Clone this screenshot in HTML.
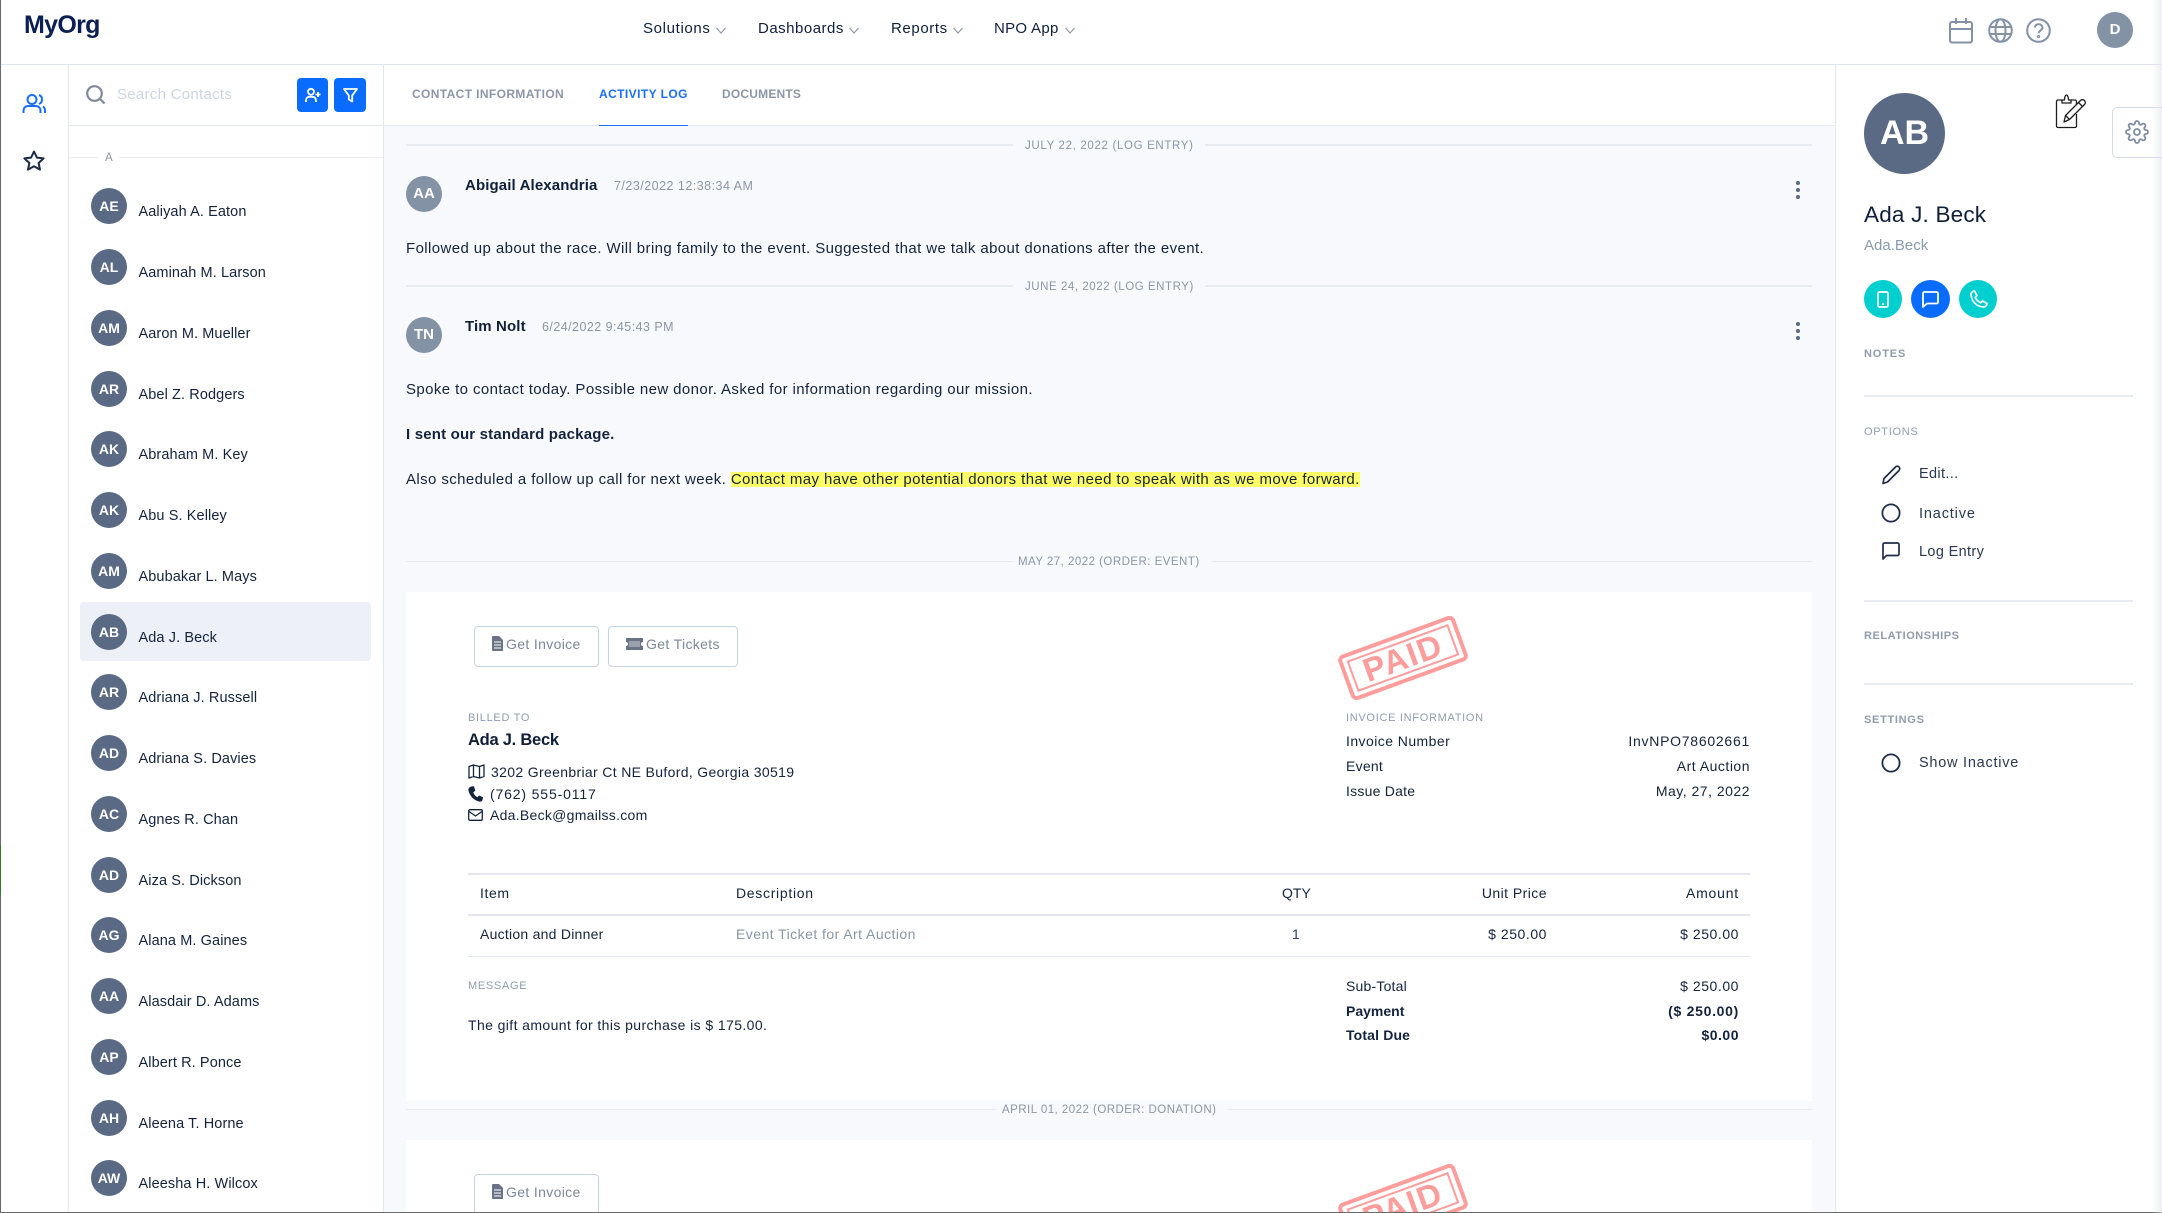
<!DOCTYPE html>
<html lang="en"><head><meta charset="utf-8"><title>MyOrg Contacts</title>
<style>
html,body{margin:0;padding:0;width:2162px;height:1213px;overflow:hidden;background:#fff}
body{position:relative;font-family:"Liberation Sans",sans-serif;color:#14233c;font-size:14px}
.a,.t{position:absolute}
.t{white-space:nowrap;line-height:20px}
.b{font-size:15px;letter-spacing:.4px}
.hl{background:#ffff66;padding:0;display:inline-block;line-height:15px}
.nav{font-size:15px;letter-spacing:.42px;color:#0f1f3a}
.tab{font-size:12px;font-weight:bold;letter-spacing:.38px;color:#8c96a6}
.lab{font-size:11px;font-weight:bold;letter-spacing:.7px;color:#909cae}
.c{position:absolute;left:91px;width:280px;height:36px}
.c i{position:absolute;left:0;top:0;width:36px;height:36px;border-radius:50%;background:#5a6a85;color:#fff;font:bold 14px/36px "Liberation Sans",sans-serif;text-align:center}
.c span{position:absolute;left:47.500px;top:6px;line-height:36px;white-space:nowrap;font-size:14.500px;letter-spacing:.1px;color:#14233c}
.av{position:absolute;width:36px;height:36px;border-radius:50%;background:#8492a6;color:#fff;font:bold 15px/36px "Liberation Sans",sans-serif;text-align:center}
.dv{position:absolute;background:#e6ebf2}
.dl{font-size:11.500px;letter-spacing:.55px;color:#8c96a6;font-weight:normal}
.btn{position:absolute;box-sizing:border-box;height:41px;border:1px solid #c6d3e1;border-radius:4px;background:#fff;color:#7c8798;font-size:14px;line-height:34px;white-space:nowrap;letter-spacing:.35px}
.dots b{display:block;width:4px;height:4px;border-radius:50%;background:#5a6a80;margin-bottom:3px}
.ln{position:absolute;left:1864px;width:269px;height:2px;background:#e8ecf2}
.op{letter-spacing:.35px;color:#2a3850;font-size:14.500px}
.r{text-align:right}
svg{position:absolute;overflow:visible}
</style></head><body>

<!-- content background -->
<div class="a" style="left:384px;top:126px;width:1452px;height:1087px;background:#f7f9fc"></div>
<!-- column & header borders -->
<div class="a" style="left:0;top:64px;width:2162px;height:1px;background:#dfe5ee"></div>
<div class="a" style="left:68px;top:64px;width:1px;height:1149px;background:#e3e8f0"></div>
<div class="a" style="left:383px;top:64px;width:1px;height:1149px;background:#e3e8f0"></div>
<div class="a" style="left:69px;top:125px;width:1767px;height:1px;background:#e3e8f0"></div>

<!-- header -->
<div class="t" style="left:24px;top:10px;font-size:25px;line-height:30px;font-weight:bold;color:#0b1f52;letter-spacing:-.7px">MyOrg</div>
<div class="t nav" style="left:643px;top:19px;letter-spacing:.65px">Solutions</div>
<div class="t nav" style="left:758px;top:19px;letter-spacing:.5px">Dashboards</div>
<div class="t nav" style="left:891px;top:19px;letter-spacing:.6px">Reports</div>
<div class="t nav" style="left:994px;top:19px;letter-spacing:.3px">NPO App</div>
<svg style="left:716px;top:27px" width="10" height="7" fill="none" stroke="#8a96a8" stroke-width="1.100"><path d="M.5 1 5 6 9.500 1"/></svg>
<svg style="left:849px;top:27px" width="10" height="7" fill="none" stroke="#8a96a8" stroke-width="1.100"><path d="M.5 1 5 6 9.500 1"/></svg>
<svg style="left:953px;top:27px" width="10" height="7" fill="none" stroke="#8a96a8" stroke-width="1.100"><path d="M.5 1 5 6 9.500 1"/></svg>
<svg style="left:1065px;top:27px" width="10" height="7" fill="none" stroke="#8a96a8" stroke-width="1.100"><path d="M.5 1 5 6 9.500 1"/></svg>
<!-- calendar -->
<svg style="left:1949px;top:18px" width="24" height="26" fill="none" stroke="#8492a6" stroke-width="2"><rect x="1" y="4" width="22" height="20.500" rx="2"/><path d="M1 11H23M7 0V6M17 0V6"/></svg>
<!-- globe -->
<svg style="left:1988px;top:18px" width="25" height="25" fill="none" stroke="#8492a6" stroke-width="2"><circle cx="12.500" cy="12.500" r="11.300"/><ellipse cx="12.500" cy="12.500" rx="5" ry="11.300"/><path d="M1.500 9H23.500M1.500 16H23.500"/></svg>
<!-- help -->
<svg style="left:2026px;top:18px" width="25" height="25" fill="none" stroke="#8492a6" stroke-width="2"><circle cx="12.500" cy="12.500" r="11.300"/><path d="M8.700 9.600c.4-2.200 2-3.300 3.900-3.300 2.200 0 3.900 1.400 3.900 3.300 0 2.900-3.900 3-3.900 5.600"/><circle cx="12.600" cy="18.500" r=".6"/></svg>
<div class="a" style="left:2097px;top:12px;width:36px;height:36px;border-radius:50%;background:#8492a6;color:#fff;font:bold 15px/36px 'Liberation Sans',sans-serif;text-align:center">D</div>

<!-- left rail -->
<svg style="left:22px;top:94px" width="24" height="20" fill="none" stroke="#1a6dff" stroke-width="2"><circle cx="10" cy="5.500" r="4.500"/><path d="M1.500 19v-2c0-3 2-5 5-5h7c3 0 5 2 5 5v2M17 1c2.200.8 3 2.600 3 4.500s-1 3.700-3 4.500M21 12.500c1.500 1 2 2.500 2 4.500v2"/></svg>
<svg style="left:23px;top:150px" width="22" height="21" fill="none" stroke="#1c2b45" stroke-width="2" stroke-linejoin="round"><path d="M11 1.500 13.900 7.600 20.600 8.400 15.600 13 17 19.600 11 16.300 5 19.600 6.400 13 1.400 8.400 8.100 7.600Z"/></svg>

<!-- search row -->
<svg style="left:86px;top:85px" width="20" height="19" fill="none" stroke="#7f8a9a" stroke-width="2.200"><circle cx="8.500" cy="8.500" r="7.300"/><path d="M13.800 13.800 18.500 18.500"/></svg>
<div class="t" style="left:117px;top:85px;font-size:15px;color:#ccd5e0;letter-spacing:.28px">Search Contacts</div>
<div class="a" style="left:297px;top:78px;width:31px;height:34px;border-radius:4px;background:#0a6cff"></div>
<svg style="left:305px;top:88px" width="16" height="15" fill="none" stroke="#fff" stroke-width="1.800"><circle cx="6" cy="3.800" r="3"/><path d="M1 14v-1.500C1 10 2.500 8.800 4.500 8.800H7.500C9.500 8.800 11 10 11 12.500V14M13 4V9M10.500 6.500H15.500"/></svg>
<div class="a" style="left:334px;top:78px;width:32px;height:34px;border-radius:4px;background:#0a6cff"></div>
<svg style="left:343px;top:88px" width="15" height="15" fill="none" stroke="#fff" stroke-width="1.800" stroke-linejoin="round"><path d="M1 1H14L9.200 7.500V13.500L5.800 11.500V7.500Z"/></svg>

<!-- A divider -->
<div class="a" style="left:69px;top:157px;width:29px;height:1px;background:#edf0f5"></div>
<div class="a" style="left:119px;top:157px;width:264px;height:1px;background:#edf0f5"></div>
<div class="t" style="left:105px;top:148px;font-size:11.500px;color:#8c96a6">A</div>

<!-- selected row -->
<div class="a" style="left:80px;top:602px;width:291px;height:59px;border-radius:4px;background:#edf0f7"></div>

<!-- contacts -->
<div class="c" style="top:188px"><i>AE</i><span>Aaliyah A. Eaton</span></div>
<div class="c" style="top:249px"><i>AL</i><span>Aaminah M. Larson</span></div>
<div class="c" style="top:310px"><i>AM</i><span>Aaron M. Mueller</span></div>
<div class="c" style="top:371px"><i>AR</i><span>Abel Z. Rodgers</span></div>
<div class="c" style="top:431px"><i>AK</i><span>Abraham M. Key</span></div>
<div class="c" style="top:492px"><i>AK</i><span>Abu S. Kelley</span></div>
<div class="c" style="top:553px"><i>AM</i><span>Abubakar L. Mays</span></div>
<div class="c" style="top:614px"><i>AB</i><span>Ada J. Beck</span></div>
<div class="c" style="top:674px"><i>AR</i><span>Adriana J. Russell</span></div>
<div class="c" style="top:735px"><i>AD</i><span>Adriana S. Davies</span></div>
<div class="c" style="top:796px"><i>AC</i><span>Agnes R. Chan</span></div>
<div class="c" style="top:857px"><i>AD</i><span>Aiza S. Dickson</span></div>
<div class="c" style="top:917px"><i>AG</i><span>Alana M. Gaines</span></div>
<div class="c" style="top:978px"><i>AA</i><span>Alasdair D. Adams</span></div>
<div class="c" style="top:1039px"><i>AP</i><span>Albert R. Ponce</span></div>
<div class="c" style="top:1100px"><i>AH</i><span>Aleena T. Horne</span></div>
<div class="c" style="top:1160px"><i>AW</i><span>Aleesha H. Wilcox</span></div>

<!-- tabs -->
<div class="t tab" style="left:412px;top:84px">CONTACT INFORMATION</div>
<div class="t tab" style="left:599px;top:84px;color:#1a6dff;letter-spacing:.42px">ACTIVITY LOG</div>
<div class="t tab" style="left:722px;top:84px;letter-spacing:.2px">DOCUMENTS</div>
<div class="a" style="left:599px;top:125px;width:89px;height:1px;background:#1a6dff"></div>

<!-- timeline entry 1 -->
<div class="dv" style="left:406px;top:144px;width:607px;height:2px"></div>
<div class="dv" style="left:1205px;top:144px;width:607px;height:2px"></div>
<div class="t dl" style="left:1025px;top:136px;letter-spacing:.66px">JULY 22, 2022 (LOG ENTRY)</div>
<div class="av" style="left:406px;top:176px">AA</div>
<div class="t" style="left:465px;top:176px;font-size:15px;font-weight:bold;color:#101f38;letter-spacing:.12px">Abigail Alexandria</div>
<div class="t" style="left:614px;top:176px;font-size:12.500px;color:#8c96a6;letter-spacing:.48px">7/23/2022 12:38:34 AM</div>
<div class="a dots" style="left:1796px;top:181px"><b></b><b></b><b></b></div>
<div class="t b" style="left:406px;top:239px">Followed up about the race. Will bring family to the event. Suggested that we talk about donations after the event.</div>

<!-- timeline entry 2 -->
<div class="dv" style="left:406px;top:285px;width:607px;height:2px"></div>
<div class="dv" style="left:1205px;top:285px;width:607px;height:2px"></div>
<div class="t dl" style="left:1025px;top:277px">JUNE 24, 2022 (LOG ENTRY)</div>
<div class="av" style="left:406px;top:317px">TN</div>
<div class="t" style="left:465px;top:317px;font-size:15px;font-weight:bold;color:#101f38;letter-spacing:.12px">Tim Nolt</div>
<div class="t" style="left:542px;top:317px;font-size:12.500px;color:#8c96a6;letter-spacing:.45px">6/24/2022 9:45:43 PM</div>
<div class="a dots" style="left:1796px;top:322px"><b></b><b></b><b></b></div>
<div class="t b" style="left:406px;top:380px">Spoke to contact today. Possible new donor. Asked for information regarding our mission.</div>
<div class="t b" style="left:406px;top:425px;font-weight:bold;letter-spacing:.18px">I sent our standard package.</div>
<div class="t b" style="left:406px;top:470px">Also scheduled a follow up call for next week. <span class="hl">Contact may have other potential donors that we need to speak with as we move forward.</span></div>

<!-- card 1 -->
<div class="dv" style="left:406px;top:561px;width:607px;height:1px"></div>
<div class="dv" style="left:1212px;top:561px;width:600px;height:1px"></div>
<div class="t dl" style="left:1018px;top:552px;letter-spacing:.47px">MAY 27, 2022 (ORDER: EVENT)</div>
<div class="a" style="left:406px;top:592px;width:1406px;height:509px;background:#fff"></div>

<div class="btn" style="left:474px;top:626px;width:125px;padding-left:31px">Get Invoice</div>
<svg style="left:492px;top:636px" width="11" height="15"><path d="M0 1a1 1 0 0 1 1-1H7L11 4V14a1 1 0 0 1-1 1H1a1 1 0 0 1-1-1Z" fill="#6a7385"/><path d="M2 6H9M2 9H9M2 12H9" stroke="#fff" stroke-width="1"/></svg>
<div class="btn" style="left:608px;top:626px;width:130px;padding-left:37px">Get Tickets</div>
<svg style="left:626px;top:638px" width="17" height="12"><path d="M0 0H17V4a2 2 0 0 0 0 4V12H0V8a2 2 0 0 0 0-4Z" fill="#6a7385"/><rect x="3" y="3" width="11" height="6" fill="#9aa1ae"/></svg>

<svg style="left:1330px;top:610px" width="146" height="96"><g transform="rotate(-20 73 48)" fill="none" stroke="#ff9c9c"><rect x="13" y="26" width="120" height="44" rx="4" stroke-width="4"/><rect x="20" y="32.500" width="106" height="31" stroke-width="2"/><text x="73" y="59" text-anchor="middle" font-family="Liberation Sans, sans-serif" font-weight="bold" font-size="33" letter-spacing="1.500" fill="#ff9c9c" stroke="none">PAID</text></g></svg>

<div class="t lab" style="left:468px;top:708px;font-weight:normal">BILLED TO</div>
<div class="t" style="left:468px;top:730px;font-size:16.500px;font-weight:bold;color:#101f38;letter-spacing:-.25px">Ada J. Beck</div>
<svg style="left:468px;top:764px" width="17" height="15" fill="none" stroke="#14233c" stroke-width="1.300" stroke-linejoin="round"><path d="M1 2.500 5.500 1 11.500 2.500 16 1V12.500L11.500 14 5.500 12.500 1 14ZM5.500 1V12.500M11.500 2.500V14"/></svg>
<div class="t" style="left:491px;top:762px;letter-spacing:.34px">3202 Greenbriar Ct NE Buford, Georgia 30519</div>
<svg style="left:468px;top:786px" width="15" height="16"><path d="M3.500.500 6 .2 7.300 4.800 5.300 6.300C5.800 8.300 7.300 10.300 9.300 11.200L11 9.500 15 11.300 14.500 14C14 15.500 12.500 15.800 11 15.500 5.500 14.300 1 8.800.400 4 .200 2.300 1.800.800 3.500.500Z" fill="#14233c"/></svg>
<div class="t" style="left:490px;top:784px;letter-spacing:.85px">(762) 555-0117</div>
<svg style="left:468px;top:809px" width="15" height="12" fill="none" stroke="#14233c" stroke-width="1.300"><rect x=".7" y=".7" width="13.600" height="10.600" rx="1.300"/><path d="M1 2.500 7.500 7 14 2.500"/></svg>
<div class="t" style="left:490px;top:805px;letter-spacing:.28px">Ada.Beck@gmailss.com</div>

<div class="t lab" style="left:1346px;top:708px;font-weight:normal;letter-spacing:.7px">INVOICE INFORMATION</div>
<div class="t" style="left:1346px;top:731px;letter-spacing:.44px">Invoice Number</div>
<div class="t r" style="right:412px;top:731px;letter-spacing:.74px">InvNPO78602661</div>
<div class="t" style="left:1346px;top:756px;letter-spacing:.24px">Event</div>
<div class="t r" style="right:412px;top:756px;letter-spacing:.5px">Art Auction</div>
<div class="t" style="left:1346px;top:781px;letter-spacing:.24px">Issue Date</div>
<div class="t r" style="right:412px;top:781px;letter-spacing:.5px">May, 27, 2022</div>

<!-- table -->
<div class="a" style="left:468px;top:873px;width:1282px;height:2px;background:#e3e6f0"></div>
<div class="a" style="left:468px;top:914px;width:1282px;height:2px;background:#e3e6f0"></div>
<div class="a" style="left:468px;top:956px;width:1282px;height:1px;background:#e3e8f0"></div>
<div class="t" style="left:480px;top:883px;letter-spacing:.6px">Item</div>
<div class="t" style="left:736px;top:883px;letter-spacing:.7px">Description</div>
<div class="t" style="left:1282px;top:883px">QTY</div>
<div class="t r" style="right:615px;top:883px;letter-spacing:.45px">Unit Price</div>
<div class="t r" style="right:423px;top:883px;letter-spacing:.8px">Amount</div>
<div class="t" style="left:480px;top:924px;letter-spacing:.25px">Auction and Dinner</div>
<div class="t" style="left:736px;top:924px;color:#8a95a6;letter-spacing:.45px">Event Ticket for Art Auction</div>
<div class="t" style="left:1292px;top:924px;color:#2a3f66">1</div>
<div class="t r" style="right:615px;top:924px;letter-spacing:.55px">$ 250.00</div>
<div class="t r" style="right:423px;top:924px;letter-spacing:.55px">$ 250.00</div>

<div class="t lab" style="left:468px;top:976px;font-weight:normal">MESSAGE</div>
<div class="t" style="left:468px;top:1015px;letter-spacing:.4px">The gift amount for this purchase is $ 175.00.</div>
<div class="t" style="left:1346px;top:976px;letter-spacing:.2px">Sub-Total</div>
<div class="t r" style="right:423px;top:976px;letter-spacing:.55px">$ 250.00</div>
<div class="t" style="left:1346px;top:1001px;font-weight:bold">Payment</div>
<div class="t r" style="right:423px;top:1001px;font-weight:bold;letter-spacing:.7px">($ 250.00)</div>
<div class="t" style="left:1346px;top:1025px;font-weight:bold;letter-spacing:.15px">Total Due</div>
<div class="t r" style="right:423px;top:1025px;font-weight:bold;letter-spacing:.5px">$0.00</div>

<!-- card 2 -->
<div class="dv" style="left:406px;top:1109px;width:590px;height:1px"></div>
<div class="dv" style="left:1228px;top:1109px;width:584px;height:1px"></div>
<div class="t dl" style="left:1002px;top:1100px;letter-spacing:.47px">APRIL 01, 2022 (ORDER: DONATION)</div>
<div class="a" style="left:406px;top:1140px;width:1406px;height:73px;background:#fff"></div>
<div class="btn" style="left:474px;top:1174px;width:125px;padding-left:31px">Get Invoice</div>
<svg style="left:492px;top:1184px" width="11" height="15"><path d="M0 1a1 1 0 0 1 1-1H7L11 4V14a1 1 0 0 1-1 1H1a1 1 0 0 1-1-1Z" fill="#6a7385"/><path d="M2 6H9M2 9H9M2 12H9" stroke="#fff" stroke-width="1"/></svg>
<svg style="left:1330px;top:1158px" width="146" height="96"><g transform="rotate(-20 73 48)" fill="none" stroke="#ff9c9c"><rect x="13" y="26" width="120" height="44" rx="4" stroke-width="4"/><rect x="20" y="32.500" width="106" height="31" stroke-width="2"/><text x="73" y="59" text-anchor="middle" font-family="Liberation Sans, sans-serif" font-weight="bold" font-size="33" letter-spacing="1.500" fill="#ff9c9c" stroke="none">PAID</text></g></svg>

<!-- right panel -->
<div class="a" style="left:1835px;top:65px;width:327px;height:1148px;background:#fff;border-left:1px solid #e3e8f0;box-sizing:border-box"></div>
<div class="a" style="left:1864px;top:93px;width:81px;height:81px;border-radius:50%;background:#5a6a85;color:#fff;font:bold 34px/81px 'Liberation Sans',sans-serif;text-align:center">AB</div>
<!-- clipboard -->
<svg style="left:2055px;top:94px" width="32" height="35" fill="none" stroke="#1d1d1f" stroke-width="1.300" stroke-linejoin="round"><path d="M7 6H3a1.500 1.500 0 0 0-1.500 1.500V32a1.500 1.500 0 0 0 1.500 1.500H20a1.500 1.500 0 0 0 1.500-1.500V20M21.500 11V7.500A1.500 1.500 0 0 0 20 6H16"/><path d="M7 9V6H9.500C9.500 3 10.500 1 11.500 1S13.500 3 13.500 6H16V9Z"/><path d="M9 28 10.500 21.500 25.500 6.500a2 2 0 0 1 4 4L14.500 25.500Z"/><path d="M10.500 21.500 14.500 25.500M23.500 8.500 27.500 12.500"/></svg>
<!-- gear box -->
<div class="a" style="left:2112px;top:107px;width:56px;height:51px;box-sizing:border-box;border:1px solid #d3dbe6;border-radius:5px;background:#fff"></div>
<svg style="left:2125px;top:120px" width="24" height="24" viewBox="0 0 24 24" fill="none" stroke="#7e8ca3" stroke-width="1.800" stroke-linejoin="round"><circle cx="12" cy="12" r="3"/><path d="M19.400 15a1.700 1.700 0 0 0 .3 1.800l.1.100a2 2 0 1 1-2.900 2.900l-.1-.1a1.700 1.700 0 0 0-2.800 1.200V21a2 2 0 1 1-4 0v-.1a1.700 1.700 0 0 0-2.900-1.200l-.1.100a2 2 0 1 1-2.800-2.900l.1-.1a1.700 1.700 0 0 0-1.200-2.800H3a2 2 0 1 1 0-4h.1a1.700 1.700 0 0 0 1.200-2.900l-.1-.1a2 2 0 1 1 2.900-2.800l.1.100a1.700 1.700 0 0 0 2.800-1.200V3a2 2 0 1 1 4 0v.1a1.700 1.700 0 0 0 2.900 1.200l.1-.1a2 2 0 1 1 2.800 2.900l-.1.100a1.700 1.700 0 0 0 1.200 2.800H21a2 2 0 1 1 0 4h-.1a1.700 1.700 0 0 0-1.500 1Z"/></svg>

<div class="t" style="left:1864px;top:202px;font-size:22.500px;line-height:26px;color:#0f1f3a;letter-spacing:.2px">Ada J. Beck</div>
<div class="t" style="left:1864px;top:236px;font-size:15px;color:#8b9bb0">Ada.Beck</div>

<div class="a" style="left:1864px;top:280px;width:38px;height:38px;border-radius:50%;background:#00cfcf"></div>
<div class="a" style="left:1911px;top:280px;width:39px;height:38px;border-radius:50%;background:#0a6cff"></div>
<div class="a" style="left:1959px;top:280px;width:38px;height:38px;border-radius:50%;background:#00cfcf"></div>
<svg style="left:1877px;top:291px" width="12" height="17" fill="none" stroke="#fff" stroke-width="1.700"><rect x="1" y="1" width="10" height="15" rx="1.500"/><path d="M5 13H7"/></svg>
<svg style="left:1922px;top:291px" width="17" height="17" fill="none" stroke="#fff" stroke-width="1.800" stroke-linejoin="round"><path d="M1 2.500a1.500 1.500 0 0 1 1.500-1.500H14.500A1.500 1.500 0 0 1 16 2.500V11a1.500 1.500 0 0 1-1.500 1.500H5L1 16Z"/></svg>
<svg style="left:1970px;top:290px" width="18" height="18" fill="none" stroke="#fff" stroke-width="1.700" stroke-linejoin="round"><path d="M4.500 1 7 5.500 5.300 7.300C6.300 9.800 8.200 11.700 10.700 12.700L12.500 11 17 13.500C16.800 15.800 15.300 17 13.500 17 6.500 16.500 1.500 11.500 1 4.500 1 2.700 2.200 1.200 4.500 1Z"/></svg>

<div class="t lab" style="left:1864px;top:344px;letter-spacing:.85px">NOTES</div>
<div class="ln" style="top:395px"></div>
<div class="t lab" style="left:1864px;top:422px;font-weight:normal;letter-spacing:.7px">OPTIONS</div>
<svg style="left:1881px;top:465px" width="20" height="20" fill="none" stroke="#1f2d48" stroke-width="1.700" stroke-linejoin="round"><path d="M2 18.500 3 13.500 14.500 2a2.400 2.400 0 0 1 3.500 3.500L6.500 17Z"/></svg>
<div class="t op" style="left:1919px;top:464px">Edit...</div>
<svg style="left:1881px;top:503px" width="20" height="20" fill="none" stroke="#1f2d48" stroke-width="1.800"><circle cx="10" cy="10" r="8.600"/></svg>
<div class="t op" style="left:1919px;top:504px;letter-spacing:.85px">Inactive</div>
<svg style="left:1882px;top:542px" width="18" height="18" fill="none" stroke="#1f2d48" stroke-width="1.700" stroke-linejoin="round"><path d="M1 2.500A1.500 1.500 0 0 1 2.500 1H15.500A1.500 1.500 0 0 1 17 2.500V12a1.500 1.500 0 0 1-1.500 1.500H4.500L1 17Z"/></svg>
<div class="t op" style="left:1919px;top:542px">Log Entry</div>
<div class="ln" style="top:600px"></div>
<div class="t lab" style="left:1864px;top:626px;letter-spacing:.55px">RELATIONSHIPS</div>
<div class="ln" style="top:683px"></div>
<div class="t lab" style="left:1864px;top:710px">SETTINGS</div>
<svg style="left:1881px;top:753px" width="20" height="20" fill="none" stroke="#1f2d48" stroke-width="1.800"><circle cx="10" cy="10" r="8.600"/></svg>
<div class="t op" style="left:1919px;top:753px;letter-spacing:.75px">Show Inactive</div>

<!-- window edges -->
<div class="a" style="left:0;top:0;width:1px;height:1213px;background:#6a6a6a"></div>
<div class="a" style="left:0;top:845px;width:1px;height:50px;background:#2f7a33"></div>
<div class="a" style="left:0;top:1212px;width:2162px;height:1px;background:#6a6a6a"></div>
<div class="a" style="left:2152px;top:0;width:10px;height:1213px;background:linear-gradient(90deg,rgba(225,228,235,0),rgba(225,228,235,.55))"></div>
</body></html>
